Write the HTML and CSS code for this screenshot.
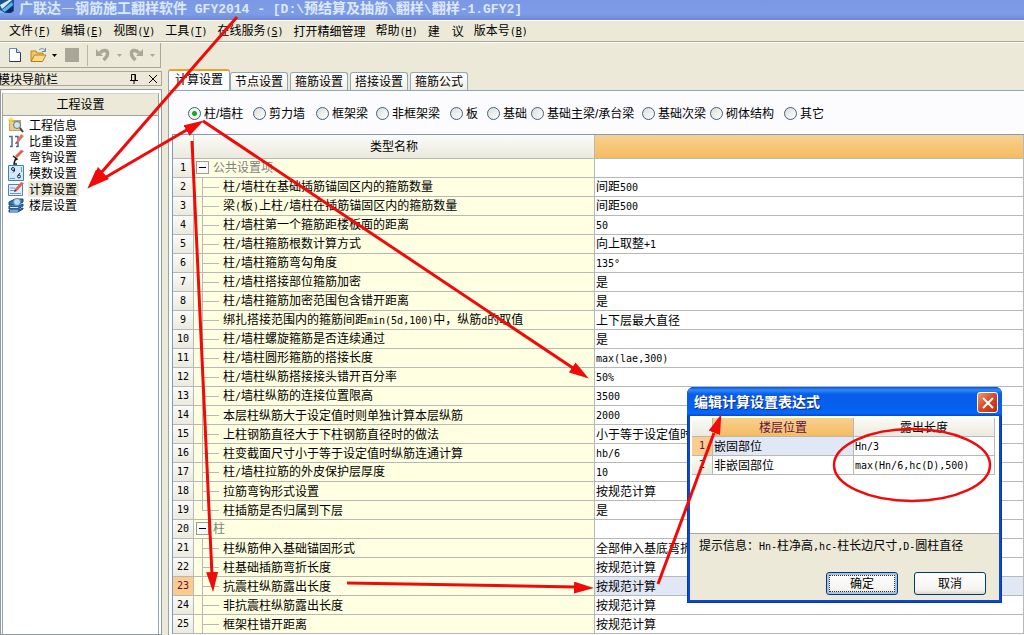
FILE: index.html
```
<!DOCTYPE html>
<html lang="zh-CN">
<head>
<meta charset="utf-8">
<title>广联达—钢筋施工翻样软件 GFY2014</title>
<link rel="stylesheet" href="styles.css">
</head>
<body>
<div class="app">
  <header class="titlebar">
    <svg class="logo" width="16" height="14" viewBox="0 0 16 14"><path d="M0 0h14v11l-3 2H0z" fill="#1c4f9c"/><path d="M0 5L9 0h3L2 9z" fill="#d8f0ff"/><path d="M2 10L12 2l1 3-8 7z" fill="#5bb4ee"/><path d="M5 12l8-6v5l-3 2z" fill="#0c2c66"/><path d="M0 10l5 3H0z" fill="#7cc4f4"/></svg>
    <h1>广联达—钢筋施工翻样软件<span class="m"> GFY2014 - [D:\</span>预结算及抽筋<span class="m">\</span>翻样<span class="m">\</span>翻样<span class="m">-1.GFY2]</span></h1>
  </header>

  <nav class="menubar">
    <button>文件<span class="m">(<u>F</u>)</span></button>
    <button>编辑<span class="m">(<u>E</u>)</span></button>
    <button>视图<span class="m">(<u>V</u>)</span></button>
    <button>工具<span class="m">(<u>T</u>)</span></button>
    <button>在线服务<span class="m">(<u>S</u>)</span></button>
    <button>打开精细管理</button>
    <button>帮助<span class="m">(<u>H</u>)</span></button>
    <button>建　议</button>
    <button>版本号<span class="m">(<u>B</u>)</span></button>
  </nav>

  <div class="toolbar">
    <div class="toolgroup">
      <button class="tool" aria-label="新建"><svg width="14" height="16" viewBox="0 0 14 16"><path d="M1.500 1.500h7l4 4v9h-11z" fill="#fff" stroke="#7088a8"/><path d="M8.500 1.500v4h4" fill="#cfe0f4" stroke="#40608c"/><path d="M12.500 6v8.500h-11" fill="none" stroke="#203858"/></svg></button>
      <button class="tool" aria-label="打开"><svg width="18" height="16" viewBox="0 0 18 16"><path d="M1 14V4h5l1 2h6v2" fill="#f0c868" stroke="#b08828"/><path d="M1 14.500L4.500 8H16l-3.500 6.500z" fill="#fcdc88" stroke="#b08020"/><path d="M9 3c2-2 5-2 6 1M15.500 1v3.500H12" fill="none" stroke="#6888b0"/></svg></button>
      <button class="tool" aria-label="打开列表"><svg width="5" height="3"><path d="M0 0h5L2.500 3z" fill="#000"/></svg></button>
      <button class="tool save" aria-label="保存"><svg width="14" height="14"><path d="M0 0h14v14H0z" fill="#a8a698"/></svg></button>
      <span class="sep"></span>
      <button class="tool" aria-label="撤销"><svg width="14" height="14" viewBox="0 0 14 14"><path d="M4 5C7 1 12 2 11.500 6c0 2.500-2 4-4 6" fill="none" stroke="#aaa798" stroke-width="3.500"/><path d="M0 1v7h7z" fill="#aaa798"/></svg></button>
      <button class="tool drop" aria-label="撤销列表"><svg width="5" height="3"><path d="M0 0h5L2.500 3z" fill="#aaa798"/></svg></button>
      <button class="tool redo" aria-label="恢复"><svg width="14" height="14" viewBox="0 0 14 14"><path d="M10 5C7 1 2 2 2.500 6c0 2.500 2 4 4 6" fill="none" stroke="#aaa798" stroke-width="3.500"/><path d="M14 1v7H7z" fill="#aaa798"/></svg></button>
      <button class="tool drop" aria-label="恢复列表"><svg width="5" height="3"><path d="M0 0h5L2.500 3z" fill="#aaa798"/></svg></button>
    </div>
  </div>

  <div class="body">
    <aside class="dock">
      <div class="dock-head">
        <h2>模块导航栏</h2>
        <button aria-label="固定"><svg width="8" height="10" viewBox="0 0 8 10"><path d="M1.500 6V.5h4V6M0 6.500h8M4 6v4M5 1v5" fill="none" stroke="#000"/></svg></button>
        <button aria-label="关闭"><svg width="8" height="8" viewBox="0 0 8 8"><path d="M0 0l8 8M8 0L0 8" stroke="#000"/></svg></button>
      </div>
      <div class="dock-body">
        <button class="group">工程设置</button>
        <ul>
          <li><button><svg width="16" height="16" viewBox="0 0 16 16"><path d="M1 3h12v11H1z" fill="#c9a05c"/><path d="M2 5h10v8H2z" fill="#e8cc90"/><path d="M3 0v7M0 3h6M1 1l4 5M5 1L1 6" stroke="#f8d840"/><circle cx="9" cy="8" r="3.500" fill="#cfe6f8" stroke="#60788c"/><path d="M12 11l3 4" stroke="#404040" stroke-width="2"/></svg><span>工程信息</span></button></li>
          <li><button><svg width="16" height="16" viewBox="0 0 16 16"><path d="M1 3.500h3v10H2M7 3.500h3v10H8" fill="none" stroke="#4468a0" stroke-width="1.500"/><path d="M8 9l5-8 3 2-6 7z" fill="#e07868"/><path d="M8 9l-1 2 3-1z" fill="#402020"/></svg><span>比重设置</span></button></li>
          <li><button><svg width="16" height="16" viewBox="0 0 16 16"><path d="M7 7l6-6 3 1-7 7z" fill="#e0604c"/><path d="M5 7l4 3-2 1-1 4H9M6 14l2-5" fill="none" stroke="#181818" stroke-width="1.500"/></svg><span>弯钩设置</span></button></li>
          <li><button><svg width="16" height="16" viewBox="0 0 16 16"><path d="M.5.5h15v15H.5z" fill="#d4eafa" stroke="#3c84b4"/><path d="M2 13.500h5M13.500 2v5" stroke="#60a0c8"/><circle cx="5" cy="4" r="1.500" fill="none" stroke="#102838"/><path d="M6.500 4v2L5 7.500M12 8l-2 2.500" fill="none" stroke="#102838"/><circle cx="11" cy="11.500" r="1.500" fill="none" stroke="#102838"/></svg><span>模数设置</span></button></li>
          <li class="on"><button><svg width="16" height="16" viewBox="0 0 16 16"><path d="M.5 3.500h14v11H.5z" fill="#e4f0ff" stroke="#5080c8"/><path d="M2 7h5M2 9.500h5M2 12.500h11" stroke="#6898d8"/><path d="M7 8l6-7 3 1-7 8z" fill="#e06450"/><path d="M7 8l-1 3 3-1z" fill="#702820"/></svg><span>计算设置</span></button></li>
          <li><button><svg width="16" height="16" viewBox="0 0 16 16"><path d="M1 5l6-3h8v3L10 8H1zM1 9h9l5-2v2l-5 3H1zM1 13h9l5-2v1l-5 3H1z" fill="#2c78b8" stroke="#18487c"/><circle cx="9" cy="5" r="3.500" fill="#b8def4" stroke="#688ca8"/><path d="M2 10.500h8M2 14h8" stroke="#d0ecfc"/></svg><span>楼层设置</span></button></li>
        </ul>
      </div>
    </aside>

    <main class="main">
      <div class="tabs" role="tablist">
        <button class="tab on" role="tab">计算设置</button>
        <button class="tab" role="tab">节点设置</button>
        <button class="tab" role="tab">箍筋设置</button>
        <button class="tab" role="tab">搭接设置</button>
        <button class="tab" role="tab">箍筋公式</button>
      </div>
      <div class="page">
        <div class="radios">
          <label><input type="radio" name="kind" checked>柱/墙柱</label>
          <label><input type="radio" name="kind">剪力墙</label>
          <label><input type="radio" name="kind">框架梁</label>
          <label><input type="radio" name="kind">非框架梁</label>
          <label><input type="radio" name="kind">板</label>
          <label><input type="radio" name="kind">基础</label>
          <label><input type="radio" name="kind">基础主梁/承台梁</label>
          <label><input type="radio" name="kind">基础次梁</label>
          <label><input type="radio" name="kind">砌体结构</label>
          <label><input type="radio" name="kind">其它</label>
        </div>
        <table class="grid">
          <colgroup><col class="c-num"><col class="c-name"><col></colgroup>
          <thead><tr><th></th><th>类型名称</th><th class="hot"></th></tr></thead>
          <tbody>
            <tr class="parent"><th>1</th><td><button class="fold" aria-label="折叠"></button>公共设置项</td><td></td></tr>
            <tr><th>2</th><td>柱<span class="m">/</span>墙柱在基础插筋锚固区内的箍筋数量</td><td>间距<span class="m">500</span></td></tr>
            <tr><th>3</th><td>梁<span class="m">(</span>板<span class="m">)</span>上柱<span class="m">/</span>墙柱在插筋锚固区内的箍筋数量</td><td>间距<span class="m">500</span></td></tr>
            <tr><th>4</th><td>柱<span class="m">/</span>墙柱第一个箍筋距楼板面的距离</td><td><span class="m">50</span></td></tr>
            <tr><th>5</th><td>柱<span class="m">/</span>墙柱箍筋根数计算方式</td><td>向上取整<span class="m">+1</span></td></tr>
            <tr><th>6</th><td>柱<span class="m">/</span>墙柱箍筋弯勾角度</td><td><span class="m">135°</span></td></tr>
            <tr><th>7</th><td>柱<span class="m">/</span>墙柱搭接部位箍筋加密</td><td>是</td></tr>
            <tr><th>8</th><td>柱<span class="m">/</span>墙柱箍筋加密范围包含错开距离</td><td>是</td></tr>
            <tr><th>9</th><td>绑扎搭接范围内的箍筋间距<span class="m">min(5d,100)</span>中，纵筋<span class="m">d</span>的取值</td><td>上下层最大直径</td></tr>
            <tr><th>10</th><td>柱<span class="m">/</span>墙柱螺旋箍筋是否连续通过</td><td>是</td></tr>
            <tr><th>11</th><td>柱<span class="m">/</span>墙柱圆形箍筋的搭接长度</td><td><span class="m">max(lae,300)</span></td></tr>
            <tr><th>12</th><td>柱<span class="m">/</span>墙柱纵筋搭接接头错开百分率</td><td><span class="m">50%</span></td></tr>
            <tr><th>13</th><td>柱<span class="m">/</span>墙柱纵筋的连接位置限高</td><td><span class="m">3500</span></td></tr>
            <tr><th>14</th><td>本层柱纵筋大于设定值时则单独计算本层纵筋</td><td><span class="m">2000</span></td></tr>
            <tr><th>15</th><td>上柱钢筋直径大于下柱钢筋直径时的做法</td><td>小于等于设定值时</td></tr>
            <tr><th>16</th><td>柱变截面尺寸小于等于设定值时纵筋连通计算</td><td><span class="m">hb/6</span></td></tr>
            <tr><th>17</th><td>柱<span class="m">/</span>墙柱拉筋的外皮保护层厚度</td><td><span class="m">10</span></td></tr>
            <tr><th>18</th><td>拉筋弯钩形式设置</td><td>按规范计算</td></tr>
            <tr class="last"><th>19</th><td>柱插筋是否归属到下层</td><td>是</td></tr>
            <tr class="parent"><th>20</th><td><button class="fold" aria-label="折叠"></button>柱</td><td></td></tr>
            <tr><th>21</th><td>柱纵筋伸入基础锚固形式</td><td>全部伸入基底弯折</td></tr>
            <tr><th>22</th><td>柱基础插筋弯折长度</td><td>按规范计算</td></tr>
            <tr class="current"><th>23</th><td>抗震柱纵筋露出长度</td><td>按规范计算</td></tr>
            <tr><th>24</th><td>非抗震柱纵筋露出长度</td><td>按规范计算</td></tr>
            <tr><th>25</th><td>框架柱错开距离</td><td>按规范计算</td></tr>
          </tbody>
        </table>
      </div>
    </main>
  </div>

  <section class="dialog" role="dialog" aria-labelledby="dlg-title">
    <div class="dlg-title">
      <h2 id="dlg-title">编辑计算设置表达式</h2>
      <button class="close" aria-label="关闭"><svg width="12" height="12" viewBox="0 0 12 12"><path d="M1 1l10 10M11 1L1 11" stroke="#fff" stroke-width="2"/></svg></button>
    </div>
    <div class="dlg-body">
      <div class="dlg-grid">
        <table>
          <colgroup><col class="c-num"><col><col></colgroup>
          <thead><tr><th></th><th class="hot">楼层位置</th><th>露出长度</th></tr></thead>
          <tbody>
            <tr class="current"><th>1</th><td>嵌固部位</td><td><span class="m">Hn/3</span></td></tr>
            <tr><th>2</th><td>非嵌固部位</td><td><span class="m">max(Hn/6,hc(D),500)</span></td></tr>
          </tbody>
        </table>
      </div>
      <p>提示信息：<span class="m">Hn-</span>柱净高<span class="m">,hc-</span>柱长边尺寸<span class="m">,D-</span>圆柱直径</p>
      <div class="actions"><button class="default">确定</button><button>取消</button></div>
    </div>
  </section>

  <svg class="marks" width="1024" height="635" viewBox="0 0 1024 635">
    <defs><marker id="head" markerUnits="userSpaceOnUse" markerWidth="20" markerHeight="12" refX="19" refY="6" orient="auto"><path d="M0 0L20 6L0 12z" fill="#f00a0a"/></marker></defs>
    <g fill="none" stroke="#f00a0a" stroke-width="3">
      <path d="M237 17L101 173"/><path d="M101 180L190 128"/>
      <path d="M203 121L573 368"/><path d="M192 141L212 575"/>
      <path d="M347 583L576 587"/><path d="M658 584L714 433"/>
      <ellipse cx="912" cy="465" rx="78" ry="36" stroke-width="2.500"/>
    </g>
    <g fill="none" stroke="none" marker-end="url(#head)">
      <path d="M237 17L88 188"/><path d="M88 188L203 121"/>
      <path d="M203 121L588 378"/><path d="M192 141L213 591"/>
      <path d="M347 583L593 588"/><path d="M658 584L721 415"/>
    </g>
    <path d="M88 188L98 167L109 179z" fill="#f00a0a"/>
  </svg>
</div>
</body>
</html>
```
FILE: styles.css
```
* { box-sizing: border-box; }
body, h1, h2, p, ul { margin: 0; padding: 0; }
body {
  font: 12px/16px "Noto Sans CJK SC", sans-serif;
  color: #000;
  background: #ece9d8;
  overflow: hidden;
}
button {
  font: inherit;
  color: inherit;
  margin: 0;
  padding: 0;
  border: 0;
  background: none;
}
ul { list-style: none; }
svg { display: block; }
.m { font-family: "DejaVu Sans Mono", monospace; font-size: 10px; white-space: pre; }

.app { position: relative; display: flex; flex-direction: column; height: 100vh; }

.titlebar {
  display: flex;
  align-items: flex-start;
  gap: 3px;
  height: 20px;
  background: linear-gradient(#7b98e4, #7d9ce8 70%, #6f88d4);
  color: #dce8fc;
}
.titlebar h1 { font-size: 14px; line-height: 14px; font-weight: bold; white-space: nowrap; }
.titlebar .m { font-family: "Liberation Mono", monospace; font-size: 13px; }

.menubar {
  display: flex;
  align-items: center;
  gap: 10px;
  height: 22px;
  padding-left: 9px;
  border-top: 1px solid #fff;
  border-bottom: 1px solid #aca899;
  white-space: nowrap;
}

.toolbar { height: 27px; border-top: 1px solid #fff; }
.toolgroup {
  display: flex;
  align-items: center;
  gap: 4px;
  width: 161px;
  height: 25px;
  padding-left: 8px;
  border-right: 1px solid #aca899;
  border-bottom: 1px solid #aca899;
}
.tool:nth-child(2) { margin-left: 4px; }
.save { margin-left: 4px; }
.sep { width: 1px; height: 21px; margin: 0 4px; background: #b8b5a4; }
.drop { margin-left: 3px; }
.redo { margin-left: 3px; }

.body { flex: 1; display: flex; gap: 6px; min-height: 0; }

.dock { display: flex; flex-direction: column; width: 162px; padding-top: 2px; }
.dock-head {
  display: flex;
  align-items: center;
  gap: 11px;
  height: 15px;
  padding-right: 4px;
  border: 1px solid #aca899;
  border-left: 0;
}
.dock-head h2 { flex: 1; margin-left: -2px; font-size: 12px; line-height: 13px; font-weight: normal; }
.dock-body {
  flex: 1;
  margin-top: 3px;
  padding: 3px 2px 0 1px;
  background: #fff;
  border: 1px solid #8e9a9e;
}
.group {
  display: block;
  width: 100%;
  height: 23px;
  padding-bottom: 2px;
  background: #ece9d8;
  border: 1px solid #a0a294;
  border-top-color: #d8d5c6;
}
.dock-body ul { padding-top: 1px; border-left: 1px solid #91a7b4; border-right: 1px solid #91a7b4; height: calc(100% - 23px); }
.dock li button { display: flex; align-items: center; gap: 4px; height: 16px; padding-left: 5px; }
.dock li span { padding: 0 2px 0 1px; }
.dock .on span { background: #ece9d8; }

.main { flex: 1; display: flex; flex-direction: column; min-width: 0; }
.tabs { display: flex; align-items: flex-end; gap: 2px; height: 21px; }
.tab {
  width: 58px;
  height: 18px;
  padding-bottom: 2px;
  border: 1px solid #91a7b4;
  border-bottom: 0;
  border-radius: 3px 3px 0 0;
  background: linear-gradient(#fff, #f0efe6);
  white-space: nowrap;
}
.tab.on {
  width: 62px;
  height: 21px;
  margin-right: -2px;
  padding-bottom: 6px;
  border-top: 2px solid #f0a020;
  background: #fcfcfe;
}
.page {
  flex: 1;
  min-height: 0;
  padding-left: 3px;
  background: #fcfcfe;
  border-left: 1px solid #91a7b4;
  box-shadow: inset 0 1px #91a7b4;
}
.radios {
  display: grid;
  grid-template-columns: 65px 63px 60px 74px 37px 44px 111px 68px 74px auto;
  align-items: center;
  height: 44px;
  padding: 3px 0 0 16px;
  white-space: nowrap;
}
.radios label { display: flex; align-items: center; gap: 3px; font-family: "Liberation Sans", "Noto Sans CJK SC", sans-serif; }
.radios input {
  appearance: none;
  width: 13px;
  height: 13px;
  margin: 0;
  border: 1px solid #3c6080;
  border-radius: 50%;
  background: linear-gradient(135deg, #dcdcd6, #fff);
}
.radios input:checked { background: radial-gradient(circle, #21a121 0 2px, #f4f4f0 3px); }

table { width: 100%; table-layout: fixed; border-collapse: separate; border-spacing: 0; }
th, td {
  height: 19px;
  padding: 0;
  font-weight: normal;
  line-height: 16px;
  white-space: nowrap;
  overflow: hidden;
  border-right: 1px solid #b8b8b8;
  border-bottom: 1px solid #b8b8b8;
}
td { padding-left: 1px; text-align: left; background: #fff; }
th { background: linear-gradient(#fbfbf8, #ebeadf); }
th.hot { background: linear-gradient(#f8d090, #f4bc60); color: #60104c; }
tbody th { font-family: "DejaVu Sans Mono", monospace; font-size: 10px; }
.c-num { width: 21px; }
.c-name { width: 401px; }

.grid { border-top: 1px solid #7f9db9; border-left: 1px solid #7f9db9; }
.grid thead th { height: 24px; padding-bottom: 2px; }
.grid td:nth-child(2) {
  padding-left: 29px;
  background:
    linear-gradient(#b8b8b8, #b8b8b8) 8px 0 / 1px 100% no-repeat,
    linear-gradient(#b8b8b8, #b8b8b8) 8px 9px / 17px 1px no-repeat,
    #ffffe1;
}
.grid .last td:nth-child(2) { background-size: 1px 9px, 17px 1px, auto; }
.grid .parent td:nth-child(2) { padding-left: 2px; color: #808080; background: #ffffe1; }
.fold {
  display: inline-block;
  width: 13px;
  height: 13px;
  margin: 0 4px 3px 0;
  vertical-align: middle;
  border: 1px solid #9a9a9a;
  background: linear-gradient(#000, #000) center / 7px 1px no-repeat, #f8f8f8;
}
.current th { background: #fdcb8b; color: #60104c; }
.grid .current td:last-child { background: #e0e8f6; }

.dialog {
  position: absolute;
  left: 687px;
  top: 387px;
  width: 315px;
  padding: 0 3px 3px;
  background: #0a48d0;
  border-radius: 7px 7px 0 0;
  box-shadow: inset 0 0 0 1px #0a36b0;
}
.dlg-title {
  display: flex;
  align-items: center;
  justify-content: space-between;
  height: 29px;
  margin: 0 -3px;
  padding: 2px 4px 0 7px;
  border-radius: 7px 7px 0 0;
  background: linear-gradient(#0a50d0, #2a8cff 10%, #0a5ce8 25%, #0560f0 75%, #0668ff 90%, #0348c8);
  color: #fff;
}
.dlg-title h2 { padding-bottom: 3px; font-size: 14px; line-height: 18px; font-weight: bold; text-shadow: 1px 1px #0a2c80; }
.close {
  display: grid;
  place-items: center;
  width: 21px;
  height: 21px;
  border: 1px solid #fff;
  border-radius: 3px;
  background: linear-gradient(135deg, #f09878, #d84824 50%, #b83010);
}
.dlg-body { background: #ece9d8; padding-bottom: 5px; }
.dlg-grid { height: 118px; padding: 2px 4px 0 2px; background: #fff; border-bottom: 1px solid #aca899; }
.dlg-grid .current td:nth-child(2) { background: #e0e8f6; }
.dialog p { padding: 3px 9px; white-space: nowrap; }
.actions { display: flex; justify-content: flex-end; gap: 16px; padding: 14px 13px 0 0; }
.actions button {
  width: 72px;
  height: 23px;
  padding-bottom: 2px;
  border: 1px solid #003c74;
  border-radius: 3px;
  background: linear-gradient(#fff, #f4f3ee 80%, #dcd8cc);
}
.actions .default { box-shadow: inset 0 0 0 2px #a8c0ec; outline: 1px dotted #303030; outline-offset: -4px; }

.marks { position: absolute; left: 0; top: 0; pointer-events: none; }
```
